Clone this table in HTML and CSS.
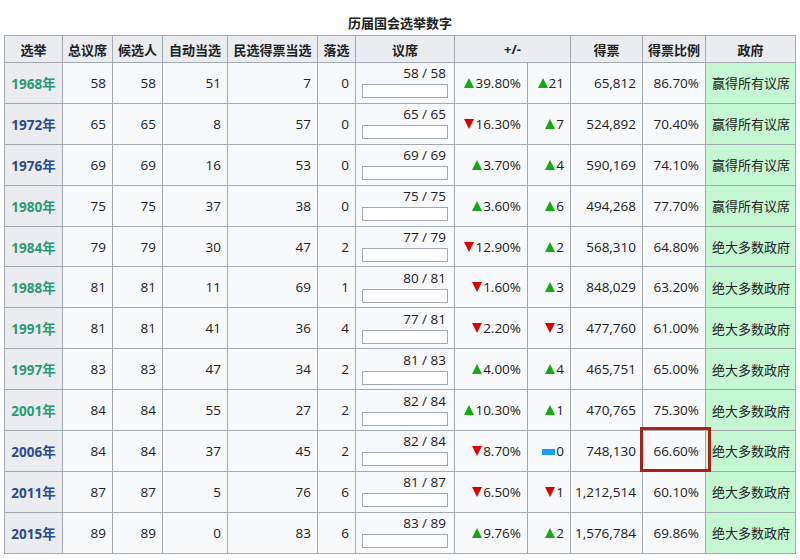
FILE: index.html
```html
<!DOCTYPE html>
<html lang="zh">
<head>
<meta charset="utf-8">
<link rel="stylesheet" href="styles.css">
<title>历届国会选举数字</title>
</head>
<body>
<table class="results">
  <caption>历届国会选举数字</caption>
  <colgroup>
    <col class="w58"><col class="w50"><col class="w50"><col class="w65"><col class="w90"><col class="w38"><col class="w99"><col class="w73"><col class="w43"><col class="w72"><col class="w63"><col class="w90">
  </colgroup>
  <thead>
    <tr class="head">
      <th>选举</th><th>总议席</th><th>候选人</th><th>自动当选</th><th>民选得票当选</th><th>落选</th><th>议席</th><th colspan="2">+/-</th><th>得票</th><th>得票比例</th><th>政府</th>
    </tr>
  </thead>
  <tbody>
    <tr><th class="yr v">1968年</th><td>58</td><td>58</td><td>51</td><td>7</td><td>0</td><td class="seat"><div class="seatbox"><span>58 / 58</span><div class="bar"></div></div></td><td><i class="up"></i>39.80%</td><td><i class="up"></i>21</td><td>65,812</td><td>86.70%</td><td class="gov">赢得所有议席</td></tr>
    <tr><th class="yr">1972年</th><td>65</td><td>65</td><td>8</td><td>57</td><td>0</td><td class="seat"><div class="seatbox"><span>65 / 65</span><div class="bar"></div></div></td><td><i class="down"></i>16.30%</td><td><i class="up"></i>7</td><td>524,892</td><td>70.40%</td><td class="gov">赢得所有议席</td></tr>
    <tr><th class="yr">1976年</th><td>69</td><td>69</td><td>16</td><td>53</td><td>0</td><td class="seat"><div class="seatbox"><span>69 / 69</span><div class="bar"></div></div></td><td><i class="up"></i>3.70%</td><td><i class="up"></i>4</td><td>590,169</td><td>74.10%</td><td class="gov">赢得所有议席</td></tr>
    <tr><th class="yr v">1980年</th><td>75</td><td>75</td><td>37</td><td>38</td><td>0</td><td class="seat"><div class="seatbox"><span>75 / 75</span><div class="bar"></div></div></td><td><i class="up"></i>3.60%</td><td><i class="up"></i>6</td><td>494,268</td><td>77.70%</td><td class="gov">赢得所有议席</td></tr>
    <tr><th class="yr v">1984年</th><td>79</td><td>79</td><td>30</td><td>47</td><td>2</td><td class="seat"><div class="seatbox"><span>77 / 79</span><div class="bar"></div></div></td><td><i class="down"></i>12.90%</td><td><i class="up"></i>2</td><td>568,310</td><td>64.80%</td><td class="gov">绝大多数政府</td></tr>
    <tr><th class="yr v">1988年</th><td>81</td><td>81</td><td>11</td><td>69</td><td>1</td><td class="seat"><div class="seatbox"><span>80 / 81</span><div class="bar"></div></div></td><td><i class="down"></i>1.60%</td><td><i class="up"></i>3</td><td>848,029</td><td>63.20%</td><td class="gov">绝大多数政府</td></tr>
    <tr><th class="yr v">1991年</th><td>81</td><td>81</td><td>41</td><td>36</td><td>4</td><td class="seat"><div class="seatbox"><span>77 / 81</span><div class="bar"></div></div></td><td><i class="down"></i>2.20%</td><td><i class="down"></i>3</td><td>477,760</td><td>61.00%</td><td class="gov">绝大多数政府</td></tr>
    <tr><th class="yr v">1997年</th><td>83</td><td>83</td><td>47</td><td>34</td><td>2</td><td class="seat"><div class="seatbox"><span>81 / 83</span><div class="bar"></div></div></td><td><i class="up"></i>4.00%</td><td><i class="up"></i>4</td><td>465,751</td><td>65.00%</td><td class="gov">绝大多数政府</td></tr>
    <tr><th class="yr v">2001年</th><td>84</td><td>84</td><td>55</td><td>27</td><td>2</td><td class="seat"><div class="seatbox"><span>82 / 84</span><div class="bar"></div></div></td><td><i class="up"></i>10.30%</td><td><i class="up"></i>1</td><td>470,765</td><td>75.30%</td><td class="gov">绝大多数政府</td></tr>
    <tr><th class="yr">2006年</th><td>84</td><td>84</td><td>37</td><td>45</td><td>2</td><td class="seat"><div class="seatbox"><span>82 / 84</span><div class="bar"></div></div></td><td><i class="down"></i>8.70%</td><td><i class="steady"></i>0</td><td>748,130</td><td class="marked">66.60%<span class="mark"></span></td><td class="gov">绝大多数政府</td></tr>
    <tr><th class="yr">2011年</th><td>87</td><td>87</td><td>5</td><td>76</td><td>6</td><td class="seat"><div class="seatbox"><span>81 / 87</span><div class="bar"></div></div></td><td><i class="down"></i>6.50%</td><td><i class="down"></i>1</td><td>1,212,514</td><td>60.10%</td><td class="gov">绝大多数政府</td></tr>
    <tr><th class="yr">2015年</th><td>89</td><td>89</td><td>0</td><td>83</td><td>6</td><td class="seat"><div class="seatbox"><span>83 / 89</span><div class="bar"></div></div></td><td><i class="up"></i>9.76%</td><td><i class="up"></i>2</td><td>1,576,784</td><td>69.86%</td><td class="gov">绝大多数政府</td></tr>
  </tbody>
</table>
</body>
</html>
```

FILE: styles.css
```css
html, body {
  margin: 0;
  padding: 0;
  background: #ffffff;
}
body {
  font-family: "Open Sans", "Noto Sans CJK SC", sans-serif;
  font-size: 13.5px;
  color: #202122;
}
.results {
  border-collapse: collapse;
  table-layout: fixed;
  width: 792px;
  margin: 0 0 0 4px;
  background: #f8f9fa;
}
.results caption {
  font-weight: bold;
  font-size: 13px;
  line-height: 20px;
  padding: 13px 0 2px;
  text-align: center;
}
.w58 { width: 58px; }
.w50 { width: 50px; }
.w65 { width: 65px; }
.w90 { width: 90px; }
.w38 { width: 38px; }
.w99 { width: 99px; }
.w73 { width: 73px; }
.w43 { width: 43px; }
.w72 { width: 72px; }
.w63 { width: 63px; }
.results th,
.results td {
  border: 1px solid #a2a9b1;
  padding: 0 6px 0 0;
  white-space: nowrap;
  overflow: visible;
}
.results td {
  text-align: right;
  height: 39.9px;
  vertical-align: middle;
}
.head th {
  background: #eaecf0;
  height: 26px;
  padding: 0;
  text-align: center;
  font-weight: bold;
  font-size: 13px;
}
.yr {
  background: #eaecf0;
  text-align: center;
  font-weight: bold;
  padding: 0 !important;
  color: #2a4b8d;
}
.yr.v {
  color: #2a9a72;
}
.results td.gov {
  background: #c4f7d2;
  text-align: left;
  padding: 0 0 0 6px;
  font-size: 13px;
}
.seatbox {
  display: flex;
  flex-direction: column;
  align-items: flex-end;
  gap: 2px;
  padding-bottom: 2px;
}
.seatbox span {
  line-height: 17px;
  padding-right: 2px;
}
.bar {
  width: 84px;
  height: 12px;
  border: 1px solid #a2a9b1;
  background: #ffffff;
}
i.up, i.down {
  display: inline-block;
  width: 0;
  height: 0;
  border-left: 5.5px solid transparent;
  border-right: 5.5px solid transparent;
  margin-right: 1px;
  vertical-align: 0;
}
i.up {
  border-bottom: 10px solid #11aa11;
}
i.down {
  border-top: 10px solid #e00000;
}
i.steady {
  display: inline-block;
  width: 13px;
  height: 6px;
  background: #1a9cf0;
  margin-right: 1px;
  vertical-align: 1px;
}
.results td.marked {
  position: relative;
}
.mark {
  position: absolute;
  left: -3px;
  top: -4px;
  right: -6px;
  bottom: -1px;
  border: 3px solid #a8221c;
  z-index: 2;
}
```
